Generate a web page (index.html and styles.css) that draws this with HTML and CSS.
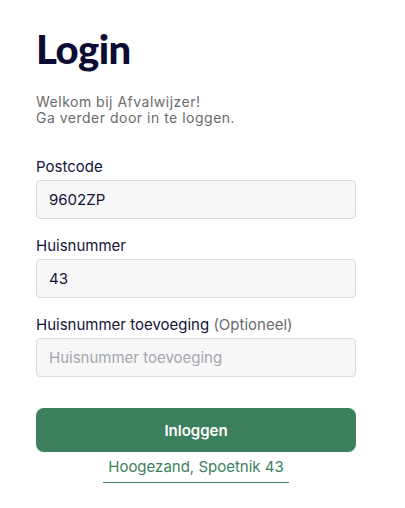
FILE: index.html
```html
<!DOCTYPE html>
<html lang="nl">
<head>
<meta charset="utf-8">
<title>Login</title>
<link rel="stylesheet" href="styles.css">
</head>
<body>
<main class="page">
  <h1 class="title">Login</h1>
  <div class="intro">
    <p class="intro-line">Welkom bij Afvalwijzer!</p>
    <p class="intro-line">Ga verder door in te loggen.</p>
  </div>
  <form class="form">
    <div class="field">
      <label class="label">Postcode</label>
      <div class="input">9602ZP</div>
    </div>
    <div class="field">
      <label class="label">Huisnummer</label>
      <div class="input">43</div>
    </div>
    <div class="field">
      <label class="label">Huisnummer toevoeging <span class="optional">(Optioneel)</span></label>
      <div class="input placeholder">Huisnummer toevoeging</div>
    </div>
    <button type="button" class="button">Inloggen</button>
    <div class="address-wrap"><a class="address">Hoogezand, Spoetnik 43</a></div>
  </form>
</main>
</body>
</html>
```
FILE: styles.css
```css
* { box-sizing: border-box; }
html, body { margin: 0; padding: 0; background: #fff; }
body { font-family: Inter, "Noto Sans", sans-serif; color: #13133a; }
.page { padding: 29px 49px 0 36px; width: 405px; }
.title { margin: 0; font-family: Lato, sans-serif; font-weight: 900; font-size: 40px; line-height: 40px; color: #0b0b33; letter-spacing: -0.5px; }
.intro { margin: 25px 0 0; display: flex; flex-direction: column; }
.intro-line { margin: 0; font-size: 14px; line-height: 16px; letter-spacing: 0.5px; color: #6b6b6b; }
.form { margin-top: 32px; display: flex; flex-direction: column; }
.field { display: flex; flex-direction: column; gap: 4px; margin-bottom: 18px; }
.label { font-size: 15px; line-height: 18px; color: #13133a; }
.optional { color: #6b6b6b; }
.input { height: 39px; border: 1px solid #dcdcdc; border-radius: 4px; background: #f7f7f7; padding: 0 12px; display: flex; align-items: center; font-size: 15px; color: #13133a; }
.placeholder { color: #a3a6ae; }
.button { margin-top: 13px; height: 44px; border: 0; border-radius: 8px; background: #3b7f5c; color: #fff; font-family: inherit; font-size: 15px; font-weight: 600; }
.address-wrap { display: flex; justify-content: center; margin-top: 6px; }
.address { color: #3b7f5c; font-size: 15px; line-height: 18px; padding: 0 5px 6px; border-bottom: 1px solid #3b7f5c; }
```
